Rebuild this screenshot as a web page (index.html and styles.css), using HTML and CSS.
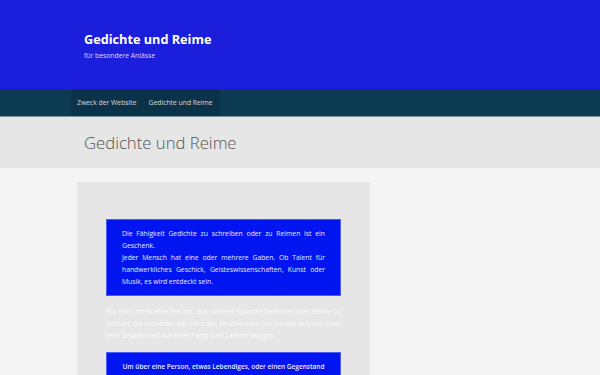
FILE: index.html
```html
<!DOCTYPE html>
<html lang="de">
<head>
<meta charset="utf-8">
<link rel="stylesheet" href="styles.css">
</head>
<body>
<header class="site-header">
  <div class="brand">
    <div class="site-title">Gedichte und Reime</div>
    <div class="site-desc">für besondere Anlässe</div>
  </div>
</header>
<nav class="main-nav">
  <ul class="menu">
    <li><a href="#">Zweck der Website</a></li>
    <li><a href="#">Gedichte und Reime</a></li>
  </ul>
</nav>
<div class="page-head">
  <h1 class="page-title">Gedichte und Reime</h1>
</div>
<main class="content-wrap">
  <article class="content">
    <div class="blue-box">
      <p>Die Fähigkeit Gedichte zu schreiben oder zu Reimen ist ein Geschenk.<br>Jeder Mensch hat eine oder mehrere Gaben. Ob Talent für handwerkliches Geschick, Geisteswissenschaften, Kunst oder Musik, es wird entdeckt sein.</p>
    </div>
    <p class="plain">Für mich ist es eine Freude, aus unserer Sprache Gedichte oder Reime zu formen, die entweder das Herz des Beschenkten mit Freude erfüllen, oder eine Gesellschaft auf einer Party zum Lachen bringen.</p>
    <div class="blue-box center">
      <p>Um über eine Person, etwas Lebendiges, oder einen Gegenstand ein Gedicht zu schreiben, braucht es Einfühlungsvermögen.</p>
    </div>
  </article>
</main>
</body>
</html>
```
FILE: styles.css
```css
* { box-sizing: border-box; }
html, body { margin: 0; padding: 0; }
body {
  background: #f4f4f4;
  font-family: "Open Sans", "Noto Sans", sans-serif;
  overflow: hidden;
  height: 375px;
}
.site-header {
  background: #1b1fdb;
  height: 89px;
  padding: 29px 0 0 84px;
}
.site-title {
  color: #ffffff;
  font-weight: 700;
  font-size: 12.7px;
  line-height: 20px;
}
.site-desc {
  color: #d8dcff;
  font-size: 6.8px;
  line-height: 10px;
  margin-top: 2px;
}
.main-nav {
  background: #0c3a52;
  height: 28px;
  border-bottom: 1px solid #7b96a3;
  padding-left: 71px;
  display: flex;
}
.menu {
  list-style: none;
  margin: 0;
  padding: 0 1px 0 0;
  display: flex;
  background: #0a3249;
  height: 27px;
}
.menu li a {
  display: block;
  color: #d5dde2;
  text-decoration: none;
  font-size: 6.8px;
  line-height: 27px;
  padding: 0 6px;
  white-space: nowrap;
}
.page-head {
  background: #e6e6e6;
  height: 51px;
  padding-left: 84px;
  display: flex;
  align-items: center;
}
.page-title {
  margin: 0;
  font-weight: 300;
  font-size: 16.7px;
  color: #555555;
  line-height: 24px;
}
.content-wrap {
  padding: 14px 0 0 77px;
}
.content {
  background: #e6e6e6;
  width: 293px;
  padding: 37px 29px 20px;
}
.blue-box {
  background: #0015ef;
  border: 1px solid #4d5cf2;
  padding: 8px 15px 7px;
}
.blue-box p {
  margin: 0;
  color: #e8ebff;
  font-size: 6.8px;
  line-height: 12px;
  text-align: justify;
}
.blue-box.center p {
  text-align: center;
  font-weight: 600;
  font-size: 6.5px;
}
.plain {
  margin: 10px 0 10px;
  color: #fafafa;
  font-size: 6.8px;
  line-height: 12px;
  text-align: justify;
}
```
